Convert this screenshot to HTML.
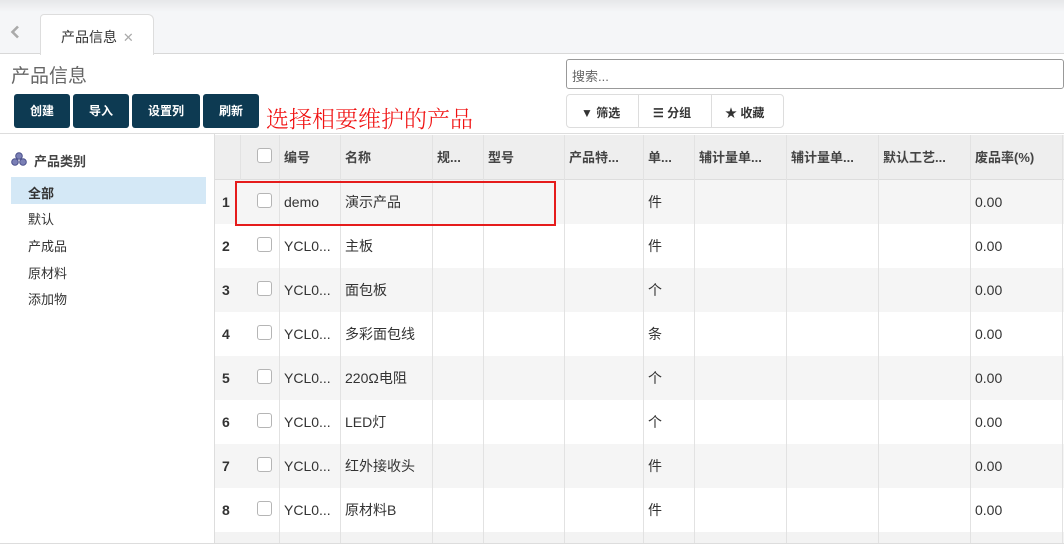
<!DOCTYPE html>
<html><head><meta charset="utf-8"><style>
*{box-sizing:border-box;margin:0;padding:0}
body{width:1064px;height:546px;overflow:hidden;background:#fff;font-family:"Liberation Sans","Noto Sans CJK SC",sans-serif;font-size:13px;color:#333;position:relative}
.abs{position:absolute}
.top{left:0;top:0;width:1064px;height:54px;background:linear-gradient(#e6e7e9 0,#f5f6f8 12px);border-bottom:1px solid #d8d8d8}
.tab{left:40px;top:14px;width:114px;height:41px;background:#fff;border:1px solid #ddd;border-bottom:none;border-radius:4px 6px 0 0;font-size:14px;color:#333;padding:12px 0 0 20px}
.btn{top:94px;height:34px;background:#0d3a52;color:#fff;border-radius:3px;font-size:12px;font-weight:bold;text-align:center;line-height:34px}
.hdr{left:215px;top:135px;width:849px;height:45px;background:#eee;border-bottom:1px solid #ddd}
.col{position:absolute;top:0;height:100%;border-left:1px solid #e2e2e2}
.th{position:absolute;top:135px;height:45px;line-height:45px;font-weight:bold;font-size:13px;color:#444;padding-left:5px;white-space:nowrap}
.td{position:absolute;line-height:44px;font-size:14px;color:#333;padding-left:5px;white-space:nowrap}
.cb{position:absolute;width:15px;height:15px;border:1px solid #b5b5b5;border-radius:3px;background:#fff}
.side{left:28px;font-size:13px;color:#333}
</style></head><body>
<div class="abs top"></div>
<svg class="abs" style="left:10px;top:25px" width="10" height="14" viewBox="0 0 10 14"><path d="M8 1.5L2.5 7L8 12.5" fill="none" stroke="#aaa" stroke-width="2.6"/></svg>
<div class="abs tab">产品信息 <span style="color:#aaa;font-size:13px;margin-left:2px">✕</span></div>
<div class="abs" style="left:11px;top:61px;font-size:19px;color:#666">产品信息</div>
<div class="abs btn" style="left:14px;width:56px">创建</div>
<div class="abs btn" style="left:73px;width:56px">导入</div>
<div class="abs btn" style="left:132px;width:68px">设置列</div>
<div class="abs btn" style="left:203px;width:56px">刷新</div>
<div class="abs" style="left:266px;top:104px;font-size:23px;line-height:28px;color:#f01010;font-family:'Noto Serif CJK SC',serif;font-weight:300;white-space:nowrap">选择相要维护的产品</div>
<div class="abs" style="left:566px;top:59px;width:498px;height:30px;border:1px solid #999;border-radius:3px;padding:6px 0 0 5px;color:#666;font-size:13px">搜索...</div>
<div class="abs" style="left:566px;top:94px;width:218px;height:34px;border:1px solid #ddd;border-radius:4px;font-size:12px;font-weight:bold;color:#333">
<div class="abs" style="left:71px;top:0;height:32px;border-left:1px solid #ddd"></div>
<div class="abs" style="left:144px;top:0;height:32px;border-left:1px solid #ddd"></div>
<span class="abs" style="left:14px;top:9px">▼ 筛选</span>
<span class="abs" style="left:86px;top:9px">☰ 分组</span>
<span class="abs" style="left:158px;top:9px">★ 收藏</span>
</div>
<div class="abs" style="left:0;top:133px;width:1064px;border-top:1px solid #ddd"></div>
<div class="abs" style="left:214px;top:134px;height:410px;border-left:1px solid #ddd"></div>
<div class="abs" style="left:0;top:543px;width:1064px;border-top:1px solid #ddd"></div>
<svg class="abs" style="left:11px;top:152px" width="16" height="14" viewBox="0 0 16 14"><g fill="#7a7fb5" stroke="#4a4f8a" stroke-width="1"><circle cx="8" cy="4" r="3.3"/><circle cx="4" cy="10" r="3.3"/><circle cx="12" cy="10" r="3.3"/></g></svg>
<div class="abs" style="left:34px;top:151px;font-weight:bold;font-size:13px;color:#444">产品类别</div>
<div class="abs" style="left:11px;top:177px;width:195px;height:27px;background:#d4e8f6"></div>
<div class="abs side" style="top:183px;font-weight:bold">全部</div>
<div class="abs side" style="top:209px">默认</div>
<div class="abs side" style="top:236px">产成品</div>
<div class="abs side" style="top:263px">原材料</div>
<div class="abs side" style="top:289px">添加物</div>
<div class="abs hdr"></div>
<div class="abs" style="left:215px;top:532px;width:849px;height:11px;background:#f3f3f3"></div>
<div class="abs" style="left:215px;top:180px;width:849px;height:44px;background:#f5f5f5"></div>
<div class="abs" style="left:215px;top:268px;width:849px;height:44px;background:#f5f5f5"></div>
<div class="abs" style="left:215px;top:356px;width:849px;height:44px;background:#f5f5f5"></div>
<div class="abs" style="left:215px;top:444px;width:849px;height:44px;background:#f5f5f5"></div>
<div class="abs" style="left:240px;top:135px;height:45px;border-left:1px solid #e2e2e2"></div>
<div class="abs" style="left:0;top:135px;width:1064px;height:408px">
<div class="col" style="left:279px"></div><div class="col" style="left:340px"></div><div class="col" style="left:432px"></div><div class="col" style="left:483px"></div><div class="col" style="left:564px"></div><div class="col" style="left:643px"></div><div class="col" style="left:694px"></div><div class="col" style="left:786px"></div><div class="col" style="left:878px"></div><div class="col" style="left:970px"></div><div class="col" style="left:1062px"></div>
</div>
<div class="cb" style="left:257px;top:148px"></div>
<div class="th" style="left:279px">编号</div><div class="th" style="left:340px">名称</div><div class="th" style="left:432px">规...</div><div class="th" style="left:483px">型号</div><div class="th" style="left:564px">产品特...</div><div class="th" style="left:643px">单...</div><div class="th" style="left:694px">辅计量单...</div><div class="th" style="left:786px">辅计量单...</div><div class="th" style="left:878px">默认工艺...</div><div class="th" style="left:970px">废品率(%)</div>

<div class="td" style="left:217px;top:180px;font-weight:bold">1</div><div class="cb" style="left:257px;top:193px"></div><div class="td" style="left:279px;top:180px">demo</div><div class="td" style="left:340px;top:180px">演示产品</div><div class="td" style="left:643px;top:180px">件</div><div class="td" style="left:970px;top:180px">0.00</div>
<div class="td" style="left:217px;top:224px;font-weight:bold">2</div><div class="cb" style="left:257px;top:237px"></div><div class="td" style="left:279px;top:224px">YCL0...</div><div class="td" style="left:340px;top:224px">主板</div><div class="td" style="left:643px;top:224px">件</div><div class="td" style="left:970px;top:224px">0.00</div>
<div class="td" style="left:217px;top:268px;font-weight:bold">3</div><div class="cb" style="left:257px;top:281px"></div><div class="td" style="left:279px;top:268px">YCL0...</div><div class="td" style="left:340px;top:268px">面包板</div><div class="td" style="left:643px;top:268px">个</div><div class="td" style="left:970px;top:268px">0.00</div>
<div class="td" style="left:217px;top:312px;font-weight:bold">4</div><div class="cb" style="left:257px;top:325px"></div><div class="td" style="left:279px;top:312px">YCL0...</div><div class="td" style="left:340px;top:312px">多彩面包线</div><div class="td" style="left:643px;top:312px">条</div><div class="td" style="left:970px;top:312px">0.00</div>
<div class="td" style="left:217px;top:356px;font-weight:bold">5</div><div class="cb" style="left:257px;top:369px"></div><div class="td" style="left:279px;top:356px">YCL0...</div><div class="td" style="left:340px;top:356px">220Ω电阻</div><div class="td" style="left:643px;top:356px">个</div><div class="td" style="left:970px;top:356px">0.00</div>
<div class="td" style="left:217px;top:400px;font-weight:bold">6</div><div class="cb" style="left:257px;top:413px"></div><div class="td" style="left:279px;top:400px">YCL0...</div><div class="td" style="left:340px;top:400px">LED灯</div><div class="td" style="left:643px;top:400px">个</div><div class="td" style="left:970px;top:400px">0.00</div>
<div class="td" style="left:217px;top:444px;font-weight:bold">7</div><div class="cb" style="left:257px;top:457px"></div><div class="td" style="left:279px;top:444px">YCL0...</div><div class="td" style="left:340px;top:444px">红外接收头</div><div class="td" style="left:643px;top:444px">件</div><div class="td" style="left:970px;top:444px">0.00</div>
<div class="td" style="left:217px;top:488px;font-weight:bold">8</div><div class="cb" style="left:257px;top:501px"></div><div class="td" style="left:279px;top:488px">YCL0...</div><div class="td" style="left:340px;top:488px">原材料B</div><div class="td" style="left:643px;top:488px">件</div><div class="td" style="left:970px;top:488px">0.00</div>

<div class="abs" style="left:235px;top:181px;width:321px;height:45px;border:2px solid #e51c1c"></div>
</body></html>
